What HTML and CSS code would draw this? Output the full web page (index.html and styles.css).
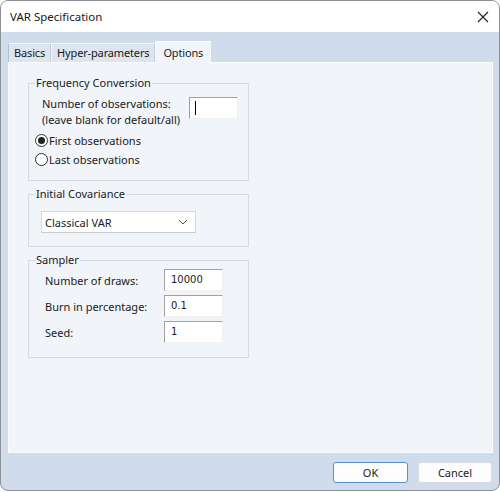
FILE: index.html
```html
<!DOCTYPE html>
<html>
<head>
<meta charset="utf-8">
<link rel="stylesheet" href="styles.css">
</head>
<body>
<div class="window">
  <div class="titlebar">
    <span class="title">VAR Specification</span>
    <svg class="close" width="12" height="12" viewBox="0 0 12 12"><path d="M1 1 L11 11 M11 1 L1 11" stroke="#222" stroke-width="1.1" fill="none"/></svg>
  </div>
  <div class="frame">
    <div class="tabs">
      <div class="tab">Basics</div>
      <div class="tab">Hyper-parameters</div>
      <div class="tab active">Options</div>
    </div>
    <div class="panel">
      <fieldset class="group g1">
        <legend>Frequency Conversion</legend>
        <div class="inner">
          <div class="obs-row">
            <div class="obs-label">Number of observations:<br>(leave blank for default/all)</div>
            <div class="input obs-input"><span class="caret"></span></div>
          </div>
          <div class="radios">
            <div class="radio-row"><span class="radio checked"></span><span>First observations</span></div>
            <div class="radio-row"><span class="radio"></span><span>Last observations</span></div>
          </div>
        </div>
      </fieldset>
      <fieldset class="group g2">
        <legend>Initial Covariance</legend>
        <div class="inner">
          <div class="combo">
            <span>Classical VAR</span>
            <svg width="10" height="6" viewBox="0 0 10 6"><path d="M1 1 L5 5 L9 1" stroke="#555" stroke-width="1" fill="none"/></svg>
          </div>
        </div>
      </fieldset>
      <fieldset class="group g3">
        <legend>Sampler</legend>
        <div class="inner">
          <div class="field-row"><span class="flabel">Number of draws:</span><div class="input num">10000</div></div>
          <div class="field-row"><span class="flabel">Burn in percentage:</span><div class="input num">0.1</div></div>
          <div class="field-row"><span class="flabel">Seed:</span><div class="input num">1</div></div>
        </div>
      </fieldset>
    </div>
    <div class="buttons">
      <div class="btn default">OK</div>
      <div class="btn">Cancel</div>
    </div>
  </div>
</div>
</body>
</html>
```
FILE: styles.css
```css
* { box-sizing: border-box; }
html, body { margin: 0; padding: 0; background: #ffffff; }
body {
  width: 500px;
  height: 492px;
  font-family: "Noto Sans", "Open Sans", sans-serif;
  font-size: 11px;
  color: #1a1a1a;
}
.window {
  width: 500px;
  height: 491px;
  border: 1px solid #8e9297;
  border-radius: 8px;
  overflow: hidden;
  display: flex;
  flex-direction: column;
  background: #d0dcec;
}
.titlebar {
  height: 31px;
  flex: none;
  background: #ffffff;
  display: flex;
  align-items: center;
  justify-content: space-between;
  padding: 0 10px 0 9px;
}
.title { font-size: 11.5px; }
.frame {
  flex: 1;
  display: flex;
  flex-direction: column;
  padding: 0 6px 0 7px;
}
.tabs {
  height: 30px;
  display: flex;
  align-items: flex-end;
}
.tab {
  height: 19px;
  line-height: 18px;
  padding: 0 5px 0 5px;
  background: #dde5f0;
  border-left: 1px solid #f4f7fb;
  border-top: 1px solid #f4f7fb;
  border-right: 1px solid #c4ccd6;
  letter-spacing: -0.15px;
}
.tab:first-child { border-left: 1px solid #b8c2ce; }
.tab.active {
  height: 22px;
  line-height: 22px;
  background: #f1f4f9;
  border-color: #f8fafc;
  padding: 0 7px 0 7px;
  margin-bottom: -1px;
  position: relative;
  z-index: 1;
}
.panel {
  height: 391px;
  flex: none;
  background: #f1f4f9;
  border: 1px solid #fbfcfe;
  padding: 12px 0 0 19px;
}
.group {
  width: 221px;
  margin: 0;
  border: 1px solid #d8dce2;
  padding: 0;
}
.group legend {
  padding: 0 1px;
  margin-left: 6px;
  line-height: 16px;
}
.g1 { height: 106px; }
.g1 .inner { padding: 5px 0 0 13px; }
.g2 { height: 61px; margin-top: 5px; }
.g2 .inner { padding: 9px 0 0 12px; }
.g3 { height: 106px; margin-top: 5px; }
.g3 .inner { padding: 0 0 0 16px; margin-top: -1px; }

.obs-row {
  display: flex;
  align-items: flex-start;
}
.obs-label {
  line-height: 16px;
  width: 147px;
}
.input {
  background: #ffffff;
  border-top: 1px solid #a2a2a2;
  border-left: 1px solid #a2a2a2;
  border-right: 1px solid #f0f0f0;
  border-bottom: 1px solid #f0f0f0;
}
.obs-input {
  width: 49px;
  height: 22px;
  margin-top: 1px;
  padding: 3px 0 0 5px;
}
.caret {
  display: block;
  width: 1px;
  height: 14px;
  background: #000;
}
.radios { margin: 3px 0 0 -7px; }
.radio-row {
  display: flex;
  align-items: center;
  height: 19px;
}
.radio {
  width: 13px;
  height: 13px;
  border: 1px solid #333;
  border-radius: 50%;
  margin-right: 1px;
  display: flex;
  align-items: center;
  justify-content: center;
  background: #fff;
}
.radio.checked::after {
  content: "";
  width: 7px;
  height: 7px;
  border-radius: 50%;
  background: #222;
}
.combo {
  width: 155px;
  height: 22px;
  background: #ffffff;
  border: 1px solid #d6d9dd;
  border-bottom-color: #c8cbd0;
  display: flex;
  align-items: center;
  justify-content: space-between;
  padding: 0 7px 0 3px;
}
.field-row {
  display: flex;
  align-items: center;
  height: 26px;
}
.flabel { width: 119px; }
.num {
  width: 59px;
  height: 22px;
  font-family: "DejaVu Sans", sans-serif;
  font-size: 10px;
  line-height: 20px;
  padding-left: 6px;
}
.buttons {
  display: flex;
  justify-content: flex-end;
  gap: 10px;
  padding: 9px 1px 0 0;
}
.btn {
  width: 74px;
  height: 21px;
  background: #fdfdfd;
  border: 1px solid #d9dde2;
  border-radius: 3px;
  text-align: center;
  line-height: 19px;
}
.btn.default {
  border: 1px solid #5b8fc8;
  width: 75px;
}
```
